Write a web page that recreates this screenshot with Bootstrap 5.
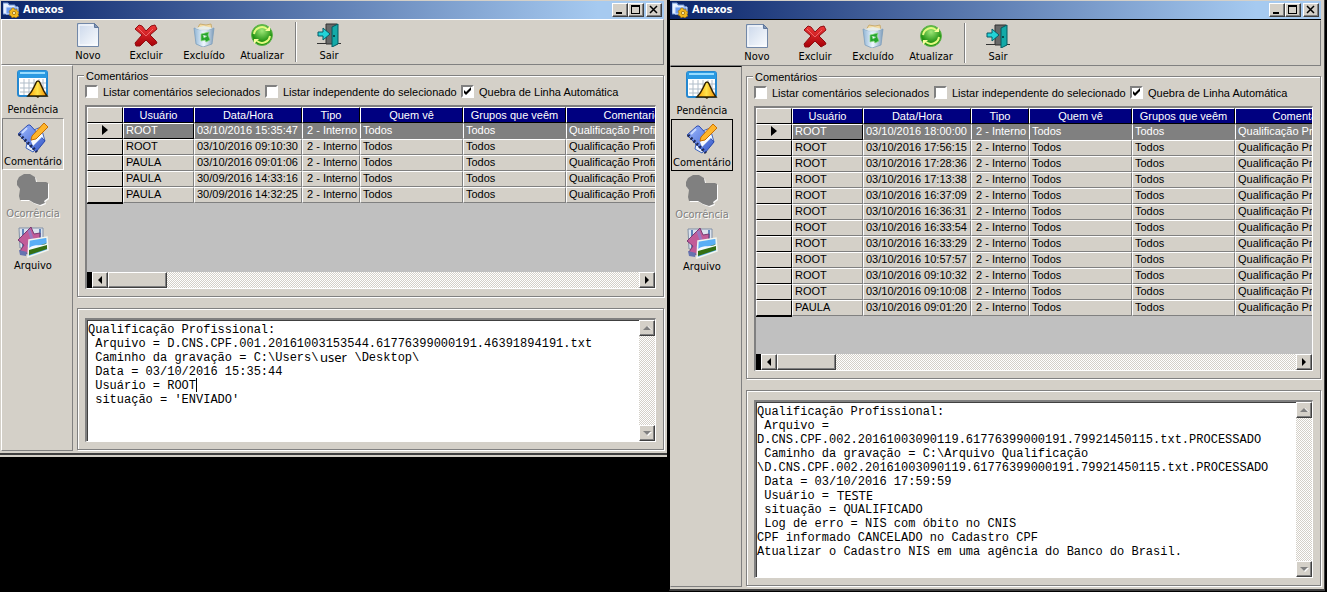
<!DOCTYPE html>
<html lang="pt-BR">
<head>
<meta charset="utf-8">
<meta name="viewport" content="width=device-width, initial-scale=1">
<title>Anexos</title>
<link href="https://cdn.jsdelivr.net/npm/bootstrap@5.3.0/dist/css/bootstrap.min.css" rel="stylesheet">
<style>
:root { --face: #d4d0c8; --shade: #808080; --dark: #404040; --ui: "DejaVu Sans Condensed", "Noto Sans", sans-serif; --sys: "Liberation Sans", Arial, sans-serif; }
body { background: #000; color: #000; font: 11px/14px var(--sys); }
button { color: inherit; }
.desk { display: grid; grid-template-columns: 667fr 655fr; column-gap: 2px; padding-right: 3px; align-items: start; }
.win { background: var(--face); padding: 1px 3px 2px 1px; border-bottom: 2px solid var(--dark); min-width: 0; }
.win-back { box-shadow: 0 2px 0 var(--face); }
.win-front { border-left: 1px solid #000; padding-left: 0; box-shadow: 1px 0 0 var(--dark); }
.titlebar { height: 18px; padding: 0 2px; background: linear-gradient(90deg, #0a246a, #a6caf0 90%); color: #fff; font: bold 11px/16px var(--ui); }
.win-front .titlebar { height: 19px; border-bottom: 1px solid #000; }
.face-btn { display: flex; align-items: center; justify-content: center; flex: none; width: 16px; height: 16px; padding: 0; background: var(--face); border: 1px solid; border-color: #fff var(--dark) var(--dark) #fff; box-shadow: inset -1px -1px 0 var(--shade); }
.titlebar .face-btn { height: 14px; }
.titlebar .face-btn:last-child { margin-left: 2px; }
.toolbar { height: 46px; padding: 2px 0 0 57px; border: 1px solid; border-color: #fff var(--shade) var(--shade) #fff; }
.win-front .toolbar { border-top-color: var(--face); border-left-color: var(--face); }
.tool { width: 58px; padding: 0; background: none; border: 0; font: 11px/14px var(--ui); }
.tool svg { display: block; width: 24px; height: 24px; margin: 1px auto 2px; }
.tool-sep { width: 2px; height: 40px; margin: 0 3px 0 4px; border-left: 1px solid var(--shade); border-right: 1px solid #fff; }
.side { flex: none; width: 72px; border: 1px solid; border-color: #fff var(--shade) var(--shade) #fff; }
.win-front .side { border-top-color: #000; border-left-color: var(--face); }
.side-btn { display: block; width: 62px; height: 52px; padding: 2px 0 0; background: none; border: 1px solid transparent; font: 11px/14px var(--ui); white-space: nowrap; }
.side-btn svg { display: block; width: 32px; height: 32px; margin: 0 auto 1px; }
.side-btn.chosen { border-color: var(--shade) #fff #fff var(--shade); }
.win-front .side-btn.chosen { border-color: #000; }
.side-btn:disabled { color: var(--shade); text-shadow: 1px 1px 0 #fff; }
.main { min-width: 0; padding: 10px 0 1px 4px; row-gap: 11px; }
.box { position: relative; min-width: 0; border: 1px solid var(--shade); box-shadow: 1px 1px 0 #fff, inset 1px 1px 0 #fff; padding: 9px 7px 7px; }
.box legend { position: absolute; top: -7px; left: 6px; width: auto; padding: 0 2px; margin: 0; background: var(--face); font: 11px/14px var(--sys); }
.opts { display: grid; grid-template-columns: 180px 196px auto; height: 20px; white-space: nowrap; }
.opt { display: flex; gap: 5px; line-height: 14px; }
.tick { appearance: none; flex: none; width: 13px; height: 13px; margin: 0; background: #fff center / 9px 9px no-repeat; border: 2px solid; border-color: var(--shade) #fff #fff var(--shade); }
.tick:checked { background-image: url("data:image/svg+xml,%3Csvg xmlns='http://www.w3.org/2000/svg' viewBox='0 0 9 9'%3E%3Cpath d='M1 3v3l2 2 5-5V0L3 5z'/%3E%3C/svg%3E"); }
.sunken { border: 2px solid; border-color: var(--shade) #fff #fff var(--shade); border-width: 2px 1px 1px 2px; box-shadow: inset 1px 1px 0 var(--dark); }
.sheet { background: silver; overflow: hidden; }
.sheet-short { min-height: 165px; }
.sheet-tall { min-height: 246px; }
.data { width: 611px; table-layout: fixed; border-collapse: separate; border-spacing: 0; white-space: nowrap; }
.data th, .data td { height: 16px; padding: 0 2px; overflow: hidden; line-height: 14px; background: var(--face); border: 1px solid; border-color: #fff var(--shade) var(--shade) #fff; }
.data td { line-height: 12px; vertical-align: top; }
.data thead th { background: navy; color: #fff; font-weight: 400; text-align: center; border-right-color: #000; border-bottom-color: #000; }
.data tr > :first-child, .data thead th:first-child { background: var(--face); border-right-color: #000; border-bottom-color: #000; text-align: center; }
.data tr:last-child > :first-child { box-shadow: 0 1px 0 #000; }
.data td:nth-child(4) { padding-left: 4px; }
.data .current td { background: var(--shade); color: #fff; border-top-color: var(--shade); }
.data .current td:nth-child(2) { border-color: #fff #000 #000 #fff; }
.data .current td:first-child { background: var(--face); border-top-color: #fff; }
.data svg { display: block; margin: 1px auto; }
.track { background: repeating-conic-gradient(#fff 0 25%, var(--face) 0 50%) 0 0 / 2px 2px; }
.stub { width: 5px; background: #000; }
.thumb { width: 59px; height: 16px; background: var(--face); border: 1px solid; border-color: #fff var(--dark) var(--dark) #fff; box-shadow: inset -1px -1px 0 var(--shade); }
.memo { position: relative; background: #fff; font: 12px/14px "Liberation Mono", monospace; }
.memo textarea { display: block; flex: 1; min-width: 0; padding: 3px 0 0 1px; border: 0; outline: 0; resize: none; overflow: hidden; background: none; color: #000; font: inherit; white-space: pre; }
.memo-short textarea { height: 121px; }
.memo-tall textarea { height: 175px; }
.patch { position: absolute; font: 13px/14px "Noto Sans", sans-serif; }
.patch-user { top: 30px; left: 233px; }
.patch-test { top: 86px; left: 81px; }
.caret { position: absolute; top: 58px; left: 109px; width: 1px; height: 14px; background: #000; }
</style>
</head>
<body>
<svg class="position-absolute" width="0" height="0" aria-hidden="true">
  <defs>
    <linearGradient id="gPage" x2="1" y2="1"><stop stop-color="#c9d6ea"/><stop offset="1" stop-color="#fbfdff"/></linearGradient>
    <linearGradient id="gRed" x2="0" y2="1"><stop stop-color="#f03a3a"/><stop offset="1" stop-color="#a80008"/></linearGradient>
    <radialGradient id="gGreen" cy=".3"><stop stop-color="#a0e878"/><stop offset="1" stop-color="#249414"/></radialGradient>
    <linearGradient id="gBin" x2="1"><stop stop-color="#8fb4d4"/><stop offset=".5" stop-color="#f0f8ff"/><stop offset="1" stop-color="#7d9cba"/></linearGradient>
    <linearGradient id="gBlue" x2="1" y2="1"><stop stop-color="#9cb8ff"/><stop offset="1" stop-color="#3558c8"/></linearGradient>
    <linearGradient id="gBell" x2="1"><stop stop-color="#ff9d00"/><stop offset=".5" stop-color="#ffe34a"/><stop offset="1" stop-color="#f08a00"/></linearGradient>
  </defs>
  <symbol id="i-app" viewBox="0 0 16 16"><path d="M0 1h5l1 2h6v9H0z" fill="#e9f1ff" stroke="#6d93d8"/><path d="M3 5h12v7H3z" fill="#6f9df0" stroke="#d4e3ff"/><path d="M11 6l1 2 2-1v2l2 1-1 2 1 2-2 1-1 1-2-1-2 1-1-2-2-1 1-2-1-2 2-1 1-2z" fill="#f3b81b" stroke="#8b5c00" stroke-width=".5"/><circle cx="11" cy="11" r="1.6" fill="#fff4b0" stroke="#8b5c00" stroke-width=".7"/></symbol>
  <symbol id="i-new" viewBox="0 0 24 24"><path d="M1.500.5h17l4 4v19h-21z" fill="url(#gPage)" stroke="#7288a8"/><path d="M18.500.5v4h4z" fill="#8397b8" stroke="#60789c"/><path d="M3 2h14M3 2v20h18" fill="none" stroke="#fff"/></symbol>
  <symbol id="i-del" viewBox="0 0 24 24"><path d="M1 6l4-4 3 1 4 5 5-5 4-1 2 4-7 6 6 6 1 2-5 3-6-6-6 6-4 0-1-3 7-8z" fill="url(#gRed)" stroke="#8e0c12"/><path d="M4 5l8 8 7-7" fill="none" stroke="#ff9494" opacity=".6"/></symbol>
  <symbol id="i-bin" viewBox="0 0 24 24"><path d="M5 6l3-5 6 1 5-1 1 6z" fill="#f3dba0" stroke="#c8ac72"/><path d="M2 5l10 3 10-3-2 16-9 3-7-3z" fill="url(#gBin)" stroke="#7e9ebb" stroke-width=".8"/><path d="M3 5l9-2 9 2-9 4z" fill="#e5f1fa" opacity=".8"/><path d="M9 11l8-2-1 3 2 5-4 2-1-2-4 1zM11 12l1 3 3-2" fill="#25a52e" stroke="#8bda80" stroke-width=".7"/></symbol>
  <symbol id="i-ref" viewBox="0 0 24 24"><circle cx="12" cy="12" r="10.500" fill="url(#gGreen)" stroke="#60b54a"/><path d="M4 11a8 8 0 0 1 13-5M20 13a8 8 0 0 1-13 5" fill="none" stroke="#e4fa80" stroke-width="2"/><path d="M15 8l5 0 0-5zM9 16l-5 0 0 5z" fill="#f7ff9d"/></symbol>
  <symbol id="i-exit" viewBox="0 0 24 24"><path d="M9 1h11v20H9z" fill="#686868" stroke="#303030"/><path d="M0 20.500h9M19 20.500h5" stroke="#333"/><path d="M15 4l6-3v20l-6 3z" fill="#13aaa8" stroke="#045a60"/><circle cx="17" cy="13" r="1" fill="#033"/><path d="M1 9h5V5l7 6-7 6v-4H1z" fill="#23d3d8" stroke="#075b66"/></symbol>
  <symbol id="i-cal" viewBox="0 0 32 32"><rect x="1" y="1" width="29" height="25" rx="2" fill="#fff" stroke="#2587cf" stroke-width="2"/><path d="M1 1h29v7H1z" fill="#2a9ae2"/><path d="M3 3h25" stroke="#97dcff" stroke-width="2"/><path d="M3 13h26M3 18h26M3 22h26M7 9v16M12 9v16M17 9v16M22 9v16M26 9v16" stroke="#b0bdc9"/><path d="M21 11c2 0 2 2 3 4 2 5 3 7 6 11H11c4-4 5-7 7-11 1-2 1-4 3-4z" fill="url(#gBell)" stroke="#302000" stroke-width="1.500"/><path d="M18 26h5l-2 2z" fill="#302000"/></symbol>
  <symbol id="i-note" viewBox="0 0 32 32"><path d="M12 10l12-5 4 14-12 11-7-4z" fill="#e8f1ff" stroke="#3c63bd"/><path d="M1 12l10-9 2 0 15 16-9 11z" fill="url(#gBlue)" stroke="#2e4cad"/><path d="M14 19l8-8 4 3-10 10z" fill="#f6faff"/><path d="M14 18l1-4L27 1l4 4-12 12z" fill="#ffb62c" stroke="#c86e00"/><path d="M2 12l18 18" stroke="#1d2955" stroke-width="3" stroke-dasharray="2 2"/><path d="M5 11l5-5" stroke="#c9d9ff" stroke-width="2"/></symbol>
  <symbol id="i-occ" viewBox="0 0 32 32"><path d="M1 8l2-4 5-3h6l5 3 1 5h10l2 1v15l-4 3 1 2-5 2-6-2-5-3H4l-1-4 1-7-3-4z" fill="#fff"/><path d="M0 7l2-4 5-3h6l5 3 1 5h10l2 1v15l-4 3 1 2-5 2-6-2-5-3H3l-1-4 1-7-3-4z" fill="#808080"/></symbol>
  <symbol id="i-file" viewBox="0 0 32 32"><path d="M2 2h24v20H3z" fill="#dce3ee" stroke="#8190a6"/><path d="M6 3v18M23 3v10" stroke="#5f84ba" stroke-width="2"/><path d="M1 14L14 1l3 7 6-1-1 14-11 7-8-3 4-6z" fill="#c25c98" stroke="#783a72"/><path d="M12 4l3 9-4 8" fill="none" stroke="#9a78c0" stroke-width="3"/><path d="M12 14l18-3 1 13-20 7z" fill="#59aef5" stroke="#f3f6ef" stroke-width="1.500"/><path d="M12 23l18-6v6l-18 6z" fill="#356f13"/><path d="M12 22c6-5 13-1 18-5v2l-18 5z" fill="#f4f9ff"/><path d="M2 24l8 2-1 4-6-1z" fill="#6573b0"/></symbol>
</svg>

<main class="desk">
  <section class="win win-back">
    <header class="titlebar d-flex align-items-center">
      <svg width="16" height="16" class="me-1"><use href="#i-app"/></svg><span class="me-auto">Anexos</span>
      <button class="face-btn" aria-label="Minimizar"><svg width="10" height="10"><path d="M1 7h6v2H1z"/></svg></button>
      <button class="face-btn" aria-label="Maximizar"><svg width="10" height="10"><path d="M0 0h9v9H0zM1 2v6h7V2z" fill-rule="evenodd"/></svg></button>
      <button class="face-btn" aria-label="Fechar"><svg width="10" height="10"><path d="M1 1l7 7M8 1L1 8" stroke="#000" stroke-width="1.500"/></svg></button>
    </header>
    <nav class="toolbar d-flex align-items-start">
      <button class="tool"><svg><use href="#i-new"/></svg>Novo</button>
      <button class="tool"><svg><use href="#i-del"/></svg>Excluir</button>
      <button class="tool"><svg><use href="#i-bin"/></svg>Excluído</button>
      <button class="tool"><svg><use href="#i-ref"/></svg>Atualizar</button>
      <span class="tool-sep"></span>
      <button class="tool"><svg><use href="#i-exit"/></svg>Sair</button>
    </nav>
    <div class="d-flex">
      <nav class="side">
        <button class="side-btn"><svg><use href="#i-cal"/></svg>Pendência</button>
        <button class="side-btn chosen"><svg><use href="#i-note"/></svg>Comentário</button>
        <button class="side-btn" disabled><svg><use href="#i-occ"/></svg>Ocorrência</button>
        <button class="side-btn"><svg><use href="#i-file"/></svg>Arquivo</button>
      </nav>
      <div class="main d-flex flex-column flex-grow-1">
        <fieldset class="box">
          <legend>Comentários</legend>
          <div class="opts">
            <label class="opt"><input class="tick" type="checkbox">Listar comentários selecionados</label>
            <label class="opt"><input class="tick" type="checkbox">Listar independente do selecionado</label>
            <label class="opt"><input class="tick" type="checkbox" checked>Quebra de Linha Automática</label>
          </div>
          <div class="sunken">
            <div class="sheet sheet-short">
              <table class="data">
                <colgroup><col style="width:36px"><col style="width:71px"><col style="width:108px"><col style="width:58px"><col style="width:103px"><col style="width:103px"><col style="width:132px"></colgroup>
                <thead><tr><th></th><th>Usuário</th><th>Data/Hora</th><th>Tipo</th><th>Quem vê</th><th>Grupos que veêm</th><th>Comentario</th></tr></thead>
                <tbody>
                  <tr class="current"><td><svg width="6" height="10"><path d="M0 0l6 5-6 5z"/></svg></td><td>ROOT</td><td>03/10/2016 15:35:47</td><td>2 - Interno</td><td>Todos</td><td>Todos</td><td>Qualificação Profissional:</td></tr>
                  <tr><td></td><td>ROOT</td><td>03/10/2016 09:10:30</td><td>2 - Interno</td><td>Todos</td><td>Todos</td><td>Qualificação Profissional:</td></tr>
                  <tr><td></td><td>PAULA</td><td>03/10/2016 09:01:06</td><td>2 - Interno</td><td>Todos</td><td>Todos</td><td>Qualificação Profissional:</td></tr>
                  <tr><td></td><td>PAULA</td><td>30/09/2016 14:33:16</td><td>2 - Interno</td><td>Todos</td><td>Todos</td><td>Qualificação Profissional:</td></tr>
                  <tr><td></td><td>PAULA</td><td>30/09/2016 14:32:25</td><td>2 - Interno</td><td>Todos</td><td>Todos</td><td>Qualificação Profissional:</td></tr>
                </tbody>
              </table>
            </div>
            <div class="track d-flex">
              <span class="stub"></span>
              <button class="face-btn" aria-label="Rolar para a esquerda"><svg width="8" height="8"><path d="M6 0v8L2 4z"/></svg></button>
              <span class="thumb me-auto"></span>
              <button class="face-btn" aria-label="Rolar para a direita"><svg width="8" height="8"><path d="M2 0v8l4-4z"/></svg></button>
            </div>
          </div>
        </fieldset>
        <div class="box flex-grow-1">
          <div class="memo memo-short sunken d-flex">
            <textarea aria-label="Texto do comentário" spellcheck="false">Qualificação Profissional:
 Arquivo = D.CNS.CPF.001.20161003153544.61776399000191.46391894191.txt
 Caminho da gravação = C:\Users\     \Desktop\
 Data = 03/10/2016 15:35:44
 Usuário = ROOT
 situação = 'ENVIADO'</textarea>
            <span class="patch patch-user">user</span><span class="caret"></span>
            <div class="track d-flex flex-column justify-content-between">
              <button class="face-btn" aria-label="Rolar para cima"><svg width="9" height="8"><path d="M1 6h8L5 2z" fill="#fff"/><path d="M0 6h8L4 2z" fill="#808080"/></svg></button>
              <button class="face-btn" aria-label="Rolar para baixo"><svg width="9" height="8"><path d="M1 3h8L5 7z" fill="#fff"/><path d="M0 2h8L4 6z" fill="#808080"/></svg></button>
            </div>
          </div>
        </div>
      </div>
    </div>
  </section>

  <section class="win win-front">
    <header class="titlebar d-flex align-items-center">
      <svg width="16" height="16" class="me-1"><use href="#i-app"/></svg><span class="me-auto">Anexos</span>
      <button class="face-btn" aria-label="Minimizar"><svg width="10" height="10"><path d="M1 7h6v2H1z"/></svg></button>
      <button class="face-btn" aria-label="Maximizar"><svg width="10" height="10"><path d="M0 0h9v9H0zM1 2v6h7V2z" fill-rule="evenodd"/></svg></button>
      <button class="face-btn" aria-label="Fechar"><svg width="10" height="10"><path d="M1 1l7 7M8 1L1 8" stroke="#000" stroke-width="1.500"/></svg></button>
    </header>
    <nav class="toolbar d-flex align-items-start">
      <button class="tool"><svg><use href="#i-new"/></svg>Novo</button>
      <button class="tool"><svg><use href="#i-del"/></svg>Excluir</button>
      <button class="tool"><svg><use href="#i-bin"/></svg>Excluído</button>
      <button class="tool"><svg><use href="#i-ref"/></svg>Atualizar</button>
      <span class="tool-sep"></span>
      <button class="tool"><svg><use href="#i-exit"/></svg>Sair</button>
    </nav>
    <div class="d-flex">
      <nav class="side">
        <button class="side-btn"><svg><use href="#i-cal"/></svg>Pendência</button>
        <button class="side-btn chosen"><svg><use href="#i-note"/></svg>Comentário</button>
        <button class="side-btn" disabled><svg><use href="#i-occ"/></svg>Ocorrência</button>
        <button class="side-btn"><svg><use href="#i-file"/></svg>Arquivo</button>
      </nav>
      <div class="main d-flex flex-column flex-grow-1">
        <fieldset class="box">
          <legend>Comentários</legend>
          <div class="opts">
            <label class="opt"><input class="tick" type="checkbox">Listar comentários selecionados</label>
            <label class="opt"><input class="tick" type="checkbox">Listar independente do selecionado</label>
            <label class="opt"><input class="tick" type="checkbox" checked>Quebra de Linha Automática</label>
          </div>
          <div class="sunken">
            <div class="sheet sheet-tall">
              <table class="data">
                <colgroup><col style="width:36px"><col style="width:71px"><col style="width:108px"><col style="width:58px"><col style="width:103px"><col style="width:103px"><col style="width:132px"></colgroup>
                <thead><tr><th></th><th>Usuário</th><th>Data/Hora</th><th>Tipo</th><th>Quem vê</th><th>Grupos que veêm</th><th>Comentario</th></tr></thead>
                <tbody>
                  <tr class="current"><td><svg width="6" height="10"><path d="M0 0l6 5-6 5z"/></svg></td><td>ROOT</td><td>03/10/2016 18:00:00</td><td>2 - Interno</td><td>Todos</td><td>Todos</td><td>Qualificação Profissional:</td></tr>
                  <tr><td></td><td>ROOT</td><td>03/10/2016 17:56:15</td><td>2 - Interno</td><td>Todos</td><td>Todos</td><td>Qualificação Profissional:</td></tr>
                  <tr><td></td><td>ROOT</td><td>03/10/2016 17:28:36</td><td>2 - Interno</td><td>Todos</td><td>Todos</td><td>Qualificação Profissional:</td></tr>
                  <tr><td></td><td>ROOT</td><td>03/10/2016 17:13:38</td><td>2 - Interno</td><td>Todos</td><td>Todos</td><td>Qualificação Profissional:</td></tr>
                  <tr><td></td><td>ROOT</td><td>03/10/2016 16:37:09</td><td>2 - Interno</td><td>Todos</td><td>Todos</td><td>Qualificação Profissional:</td></tr>
                  <tr><td></td><td>ROOT</td><td>03/10/2016 16:36:31</td><td>2 - Interno</td><td>Todos</td><td>Todos</td><td>Qualificação Profissional:</td></tr>
                  <tr><td></td><td>ROOT</td><td>03/10/2016 16:33:54</td><td>2 - Interno</td><td>Todos</td><td>Todos</td><td>Qualificação Profissional:</td></tr>
                  <tr><td></td><td>ROOT</td><td>03/10/2016 16:33:29</td><td>2 - Interno</td><td>Todos</td><td>Todos</td><td>Qualificação Profissional:</td></tr>
                  <tr><td></td><td>ROOT</td><td>03/10/2016 10:57:57</td><td>2 - Interno</td><td>Todos</td><td>Todos</td><td>Qualificação Profissional:</td></tr>
                  <tr><td></td><td>ROOT</td><td>03/10/2016 09:10:32</td><td>2 - Interno</td><td>Todos</td><td>Todos</td><td>Qualificação Profissional:</td></tr>
                  <tr><td></td><td>ROOT</td><td>03/10/2016 09:10:08</td><td>2 - Interno</td><td>Todos</td><td>Todos</td><td>Qualificação Profissional:</td></tr>
                  <tr><td></td><td>PAULA</td><td>03/10/2016 09:01:20</td><td>2 - Interno</td><td>Todos</td><td>Todos</td><td>Qualificação Profissional:</td></tr>
                </tbody>
              </table>
            </div>
            <div class="track d-flex">
              <span class="stub"></span>
              <button class="face-btn" aria-label="Rolar para a esquerda"><svg width="8" height="8"><path d="M6 0v8L2 4z"/></svg></button>
              <span class="thumb me-auto"></span>
              <button class="face-btn" aria-label="Rolar para a direita"><svg width="8" height="8"><path d="M2 0v8l4-4z"/></svg></button>
            </div>
          </div>
        </fieldset>
        <div class="box flex-grow-1">
          <div class="memo memo-tall sunken d-flex">
            <textarea aria-label="Texto do comentário" spellcheck="false">Qualificação Profissional:
 Arquivo =
D.CNS.CPF.002.20161003090119.61776399000191.79921450115.txt.PROCESSADO
 Caminho da gravação = C:\Arquivo Qualificação
\D.CNS.CPF.002.20161003090119.61776399000191.79921450115.txt.PROCESSADO
 Data = 03/10/2016 17:59:59
 Usuário =
 situação = QUALIFICADO
 Log de erro = NIS com óbito no CNIS
CPF informado CANCELADO no Cadastro CPF
Atualizar o Cadastro NIS em uma agência do Banco do Brasil.</textarea>
            <span class="patch patch-test">TESTE</span>
            <div class="track d-flex flex-column justify-content-between">
              <button class="face-btn" aria-label="Rolar para cima"><svg width="9" height="8"><path d="M1 6h8L5 2z" fill="#fff"/><path d="M0 6h8L4 2z" fill="#808080"/></svg></button>
              <button class="face-btn" aria-label="Rolar para baixo"><svg width="9" height="8"><path d="M1 3h8L5 7z" fill="#fff"/><path d="M0 2h8L4 6z" fill="#808080"/></svg></button>
            </div>
          </div>
        </div>
      </div>
    </div>
  </section>
</main>
<script src="https://cdn.jsdelivr.net/npm/bootstrap@5.3.0/dist/js/bootstrap.bundle.min.js"></script>
</body>
</html>
